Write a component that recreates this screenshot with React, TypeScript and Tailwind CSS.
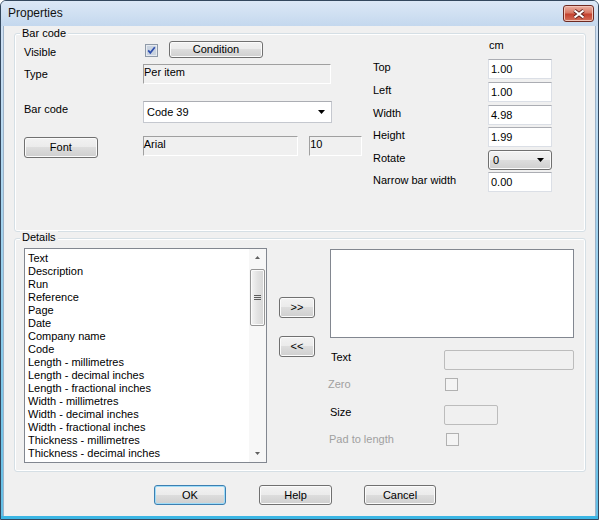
import React from 'react';

const btnCls =
  'border border-[#707070] rounded-[3px] bg-[linear-gradient(to_bottom,#f2f2f2_0%,#ebebeb_49%,#dddddd_50%,#cfcfcf_100%)] shadow-[inset_0_0_0_1px_#fbfbfb] flex items-center justify-center text-black';

const inputCls =
  'bg-white border border-[#dbdfe6] border-t-[#abadb3] flex items-center pl-[2px]';

const sunkenCls =
  'bg-[#f0f0f0] border border-t-[#a0a0a0] border-l-[#a0a0a0] border-r-white border-b-white leading-[13px]';

const disabledBoxCls = 'bg-[#f0f0f0] border border-[#bcbcbc] rounded-[2px]';

const listItems = [
  'Text',
  'Description',
  'Run',
  'Reference',
  'Page',
  'Date',
  'Company name',
  'Code',
  'Length - millimetres',
  'Length - decimal inches',
  'Length - fractional inches',
  'Width - millimetres',
  'Width - decimal inches',
  'Width - fractional inches',
  'Thickness - millimetres',
  'Thickness - decimal inches',
  'Thickness - fractional inches',
  'Colour',
];

const ComboArrow = () => (
  <svg width="7" height="4" viewBox="0 0 7 4">
    <path d="M0 0h7L3.5 4z" fill="#000" />
  </svg>
);

const CheckedBox = () => (
  <svg width="13" height="13" viewBox="0 0 13 13">
    <rect x="0.5" y="0.5" width="12" height="12" fill="#e6eaf0" stroke="#8f9aa8" />
    <rect x="2" y="2" width="9" height="9" fill="#c9d3e0" />
    <path d="M3.2 6.4 L5.3 8.9 L9.8 3.2" fill="none" stroke="#2f4fae" strokeWidth="1.7" />
  </svg>
);

const EmptyBox = () => (
  <svg width="13" height="13" viewBox="0 0 13 13">
    <rect x="0.5" y="0.5" width="12" height="12" fill="#f4f4f4" stroke="#b1b1b1" />
  </svg>
);

const GroupBox: React.FC<{ label: string; className: string; labelTop: string; children: React.ReactNode }> = ({
  label,
  className,
  labelTop,
  children,
}) => (
  <div
    className={`relative ml-[10px] w-[572px] border border-[#d5dfe5] rounded-[3px] shadow-[inset_0_0_0_1px_#ffffff] flex ${className}`}
  >
    <span className={`absolute ${labelTop} left-[5px] px-[2px] leading-[13px] bg-[#f0f0f0]`}>{label}</span>
    {children}
  </div>
);

export default function App() {
  // top margins give the reference's slightly uneven row pitch
  const rightRows = [
    { label: 'Top', value: '1.00', mt: 'mt-0' },
    { label: 'Left', value: '1.00', mt: 'mt-[3px]' },
    { label: 'Width', value: '4.98', mt: 'mt-[3px]' },
    { label: 'Height', value: '1.99', mt: 'mt-[2px]' },
  ];

  return (
    <div
      className="w-[599px] h-[520px] flex flex-col border border-[#34485e] rounded-t-[6px] overflow-hidden text-[11px] leading-[13px] text-black bg-[#c9dbf0]"
      style={{ fontFamily: '"Liberation Sans", Arial, sans-serif' }}
    >
      {/* Title bar */}
      <div className="h-[25px] flex items-center justify-between pl-[7px] pr-[4px] bg-[linear-gradient(to_bottom,#dce8f6,#c4d8ee)]">
        <span className="text-[12px] text-[#111]">Properties</span>
        <div className="w-[31px] h-[17px] rounded-[3px] border border-[#6e2a22] bg-[linear-gradient(to_bottom,#eab0a2_0%,#d87a66_45%,#c4422f_55%,#d4705a_100%)] shadow-[inset_0_0_0_1px_#f2c4b8] flex items-center justify-center">
          <svg width="14" height="10" viewBox="0 0 14 10">
            <path d="M2.5 1.5 L11.5 8.5 M11.5 1.5 L2.5 8.5" stroke="#5a1f1a" strokeWidth="3.8" />
            <path d="M2.5 1.5 L11.5 8.5 M11.5 1.5 L2.5 8.5" stroke="#ffffff" strokeWidth="2.2" />
          </svg>
        </div>
      </div>

      {/* Body with frame */}
      <div className="flex flex-1">
        <div className="w-[3px] bg-[linear-gradient(to_bottom,#cfe0f3,#63bfe6)] border-r border-r-[#9fb3c8]" />
        <div className="w-[591px] bg-[#f0f0f0] flex flex-col">
          {/* Bar code group */}
          <GroupBox label="Bar code" className="mt-[7px] h-[199px]" labelTop="-top-[7px]">
            {/* left column */}
            <div className="ml-[9px] w-[338px] flex flex-col">
              <div className="mt-[7px] h-[17px] flex items-start">
                <span className="w-[121px] mt-[5px]">Visible</span>
                <div className="mt-[3px] flex">
                  <CheckedBox />
                </div>
                <div className={`${btnCls} ml-[11px] w-[94px] h-[17px]`}>Condition</div>
              </div>
              <div className="mt-[6px] h-[20px] flex items-start">
                <span className="w-[119px] mt-[4px]">Type</span>
                <div className={`${sunkenCls} w-[188px] h-[20px] pt-[1px]`}>Per item</div>
              </div>
              <div className="mt-[17px] h-[22px] flex items-start">
                <span className="w-[119px] mt-[2px]">Bar code</span>
                <div className="w-[189px] h-[22px] bg-white border border-[#c5c8cf] border-t-[#abadb3] flex items-center justify-between pl-[3px] pr-[6px]">
                  <span>Code 39</span>
                  <ComboArrow />
                </div>
              </div>
              <div className="mt-[13px] h-[21px] flex items-start">
                <div className={`${btnCls} mt-[1px] w-[74px] h-[21px]`}>Font</div>
                <div className={`${sunkenCls} ml-[45px] w-[156px] h-[20px] pt-[1px]`}>Arial</div>
                <div className={`${sunkenCls} ml-[11px] w-[53px] h-[20px] pt-[1px]`}>10</div>
              </div>
            </div>

            {/* right column */}
            <div className="ml-[10px] w-[180px] flex flex-col">
              <div className="mt-[5px] h-[13px] pl-[117px]">cm</div>
              <div className="mt-[7px] flex flex-col">
                {rightRows.map((r) => (
                  <div key={r.label} className={`${r.mt} h-[20px] flex items-start`}>
                    <span className="w-[116px] pl-[1px] mt-[2px]">{r.label}</span>
                    <div className={`${inputCls} w-[64px] h-[20px]`}>{r.value}</div>
                  </div>
                ))}
                <div className="mt-[3px] h-[20px] flex items-start">
                  <span className="w-[116px] pl-[1px] mt-[2px]">Rotate</span>
                  <div className={`${btnCls} w-[64px] h-[20px] !justify-between pl-[4px] pr-[7px]`}>
                    <span>0</span>
                    <ComboArrow />
                  </div>
                </div>
                <div className="mt-[2px] h-[20px] flex items-start">
                  <span className="w-[116px] pl-[1px] mt-[2px]">Narrow bar width</span>
                  <div className={`${inputCls} w-[64px] h-[20px]`}>0.00</div>
                </div>
              </div>
            </div>
          </GroupBox>

          {/* Details group */}
          <GroupBox label="Details" className="mt-[6px] h-[234px]" labelTop="-top-[8px]">
            {/* list box */}
            <div className="ml-[9px] mt-[9px] w-[243px] h-[215px] bg-white border border-[#828790] flex overflow-hidden">
              <div className="flex-1 pt-[3px] pl-[3px] overflow-hidden">
                {listItems.map((it) => (
                  <div key={it} className="h-[13px] whitespace-nowrap">
                    {it}
                  </div>
                ))}
              </div>
              <div className="w-[17px] bg-[#f7f7f7] flex flex-col">
                <div className="h-[17px] flex items-center justify-center">
                  <svg width="5" height="3" viewBox="0 0 5 3">
                    <path d="M0 3h5L2.5 0z" fill="#606060" />
                  </svg>
                </div>
                <div className="mt-[3px] mx-[1px] h-[57px] rounded-[2px] border border-[#959595] bg-[linear-gradient(to_right,#f4f4f4,#e2e2e2_50%,#d6d6d6)] shadow-[inset_0_0_0_1px_#fbfbfb] flex flex-col items-center justify-center gap-[1px]">
                  <div className="w-[7px] h-[1px] bg-[#5c5c5c]" />
                  <div className="w-[7px] h-[1px] bg-[#5c5c5c]" />
                  <div className="w-[7px] h-[1px] bg-[#5c5c5c]" />
                </div>
                <div className="flex-1" />
                <div className="h-[17px] flex items-center justify-center">
                  <svg width="5" height="3" viewBox="0 0 5 3">
                    <path d="M0 0h5L2.5 3z" fill="#606060" />
                  </svg>
                </div>
              </div>
            </div>

            {/* move buttons */}
            <div className="ml-[12px] w-[36px] flex flex-col">
              <div className={`${btnCls} mt-[58px] h-[21px]`}>&gt;&gt;</div>
              <div className={`${btnCls} mt-[18px] h-[21px]`}>&lt;&lt;</div>
            </div>

            {/* right side */}
            <div className="ml-[15px] w-[244px] flex flex-col">
              <div className="mt-[10px] h-[89px] bg-white border border-[#828790]" />
              <div className="mt-[12px] h-[20px] flex items-start">
                <span className="w-[114px] pl-[1px] mt-[1px]">Text</span>
                <div className={`${disabledBoxCls} w-[130px] h-[20px]`} />
              </div>
              <div className="mt-[8px] h-[13px] flex items-center">
                <span className="w-[117px] -ml-[2px] pr-[2px] text-[#a0a0a0]">Zero</span>
                <EmptyBox />
              </div>
              <div className="mt-[14px] h-[20px] flex items-start">
                <span className="w-[114px] mt-[1px]">Size</span>
                <div className={`${disabledBoxCls} w-[54px] h-[20px]`} />
              </div>
              <div className="mt-[8px] h-[13px] flex items-center">
                <span className="w-[117px] -ml-[1px] pr-[1px] text-[#a0a0a0]">Pad to length</span>
                <EmptyBox />
              </div>
            </div>
          </GroupBox>

          {/* bottom buttons */}
          <div className="mt-[13px] h-[20px] flex">
            <div className={`${btnCls} ml-[150px] w-[72px] h-[20px] !border-[#3c7fb1] !shadow-[inset_0_0_0_1px_#9fdcf8]`}>OK</div>
            <div className={`${btnCls} ml-[33px] w-[73px] h-[20px]`}>Help</div>
            <div className={`${btnCls} ml-[32px] w-[72px] h-[20px]`}>Cancel</div>
          </div>
        </div>
        <div className="w-[3px] bg-[linear-gradient(to_bottom,#cfe0f3,#63bfe6)] border-l border-l-[#9fb3c8]" />
      </div>
      <div className="h-[3px] bg-[#3cb6e4]" />
    </div>
  );
}
